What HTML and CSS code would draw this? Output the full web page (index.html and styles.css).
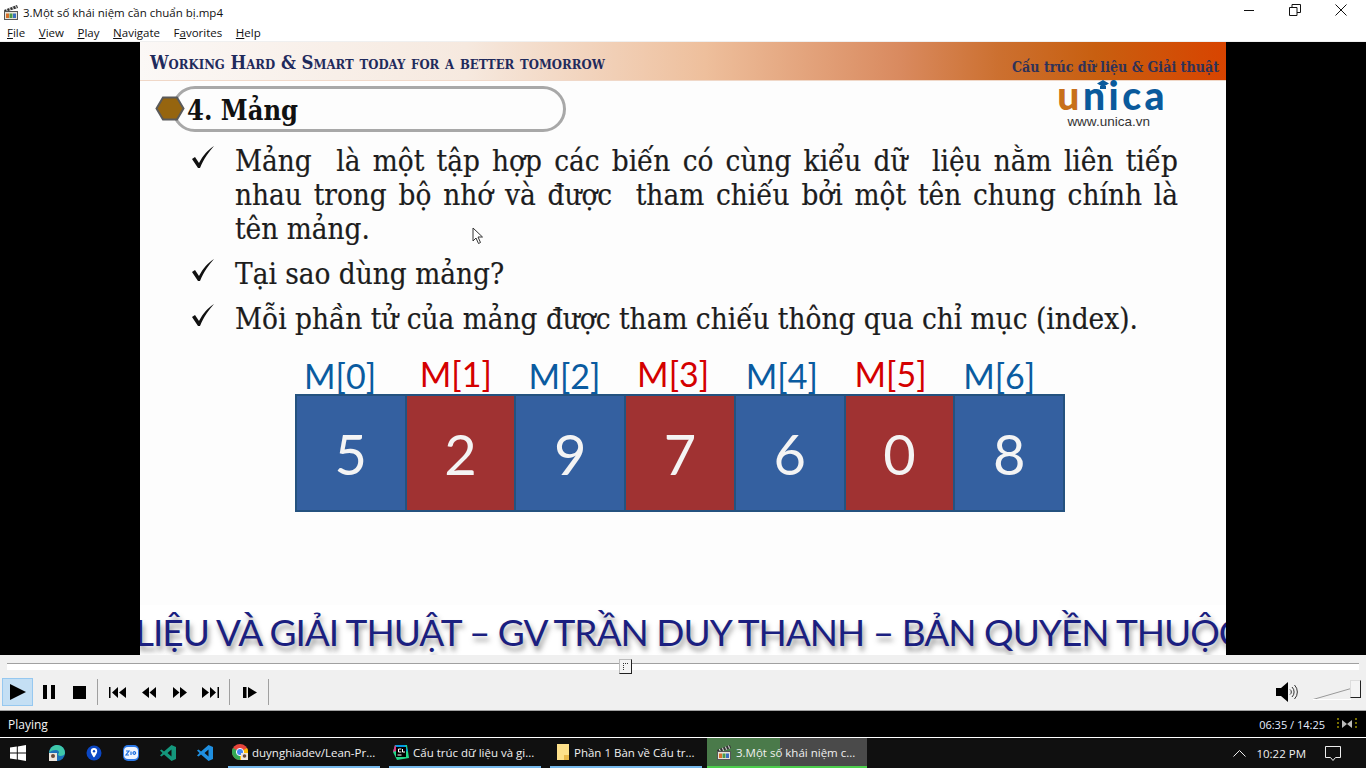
FILE: index.html
```html
<!DOCTYPE html>
<html lang="en">
<head>
    <meta charset="UTF-8">
    <meta name="viewport" content="width=device-width, initial-scale=1.0">
    <title>Media Player</title>
    <link rel="stylesheet" href="styles.css">
</head>
<body>

    <svg width="0" height="0" class="defs">
        <symbol id="clapper" viewBox="0 0 16 16">
            <path d="M1 6L14 1l1 3L2 8z" fill="#333"/>
            <path d="M3.500 5l1 3M6.500 3.800l1 3M9.500 2.700l1 3M12.500 1.600l1 3" stroke="#eee"/>
            <rect x="1.500" y="7.500" width="13" height="8" fill="#e8e4d8" stroke="#555"/>
            <path d="M3 9.500h3v4.500H3z" fill="#d8702a"/>
            <path d="M6.500 9.500h3v4.500h-3z" fill="#4a9a4a"/>
            <path d="M10 9.500h3v4.500h-3z" fill="#3a6fc0"/>
        </symbol>
        <symbol id="tick" viewBox="0 0 26 24">
            <path d="M2 14l3-2 4 6C13 10 18 5 24 1c-5 6-10 12-14 22h-2z" fill="#111"/>
        </symbol>
    </svg>

    <!-- Title and menu -->
    <div class="titlebar">
        <svg class="app-icon" width="16" height="16"><use href="#clapper"/></svg>
        <span class="title">3.Một số khái niệm cần chuẩn bị.mp4</span>
        <div class="winbtns">
            <svg width="12" height="12" viewBox="0 0 12 12"><path d="M1 6.500h10" stroke="#111"/></svg>
            <svg width="12" height="12" viewBox="0 0 12 12"><path d="M.5 3.500h7.500v8H.5zM3 3.500V.5h8.500v8H8" fill="none" stroke="#111"/></svg>
            <svg width="12" height="12" viewBox="0 0 12 12"><path d="M.5 .5l11 11M11.500 .5l-11 11" stroke="#111"/></svg>
        </div>
    </div>
    <div class="menubar">
        <span><u>F</u>ile</span>
        <span><u>V</u>iew</span>
        <span><u>P</u>lay</span>
        <span><u>N</u>avigate</span>
        <span>F<u>a</u>vorites</span>
        <span><u>H</u>elp</span>
    </div>

    <!-- Video area -->
    <div class="video">
        <div class="slide">
            <div class="band">
                <span class="motto">Working Hard &amp; Smart today for a better tomorrow</span>
                <span class="course">Cấu trúc dữ liệu &amp; Giải thuật</span>
            </div>

            <div class="head-row">
                <div class="heading">
                    <svg class="hexagon" width="30" height="25" viewBox="0 0 30 25">
                        <path d="M8 1.500h14l6.500 11-6.500 11H8L1.500 12.500z" fill="#96650f" stroke="#5a5a5a" stroke-width="2"/>
                    </svg>
                    <span class="heading-text">4. Mảng</span>
                </div>
                <div class="logo">
                    <div class="logo-word"><span class="u">u</span>nica
                        <svg class="logo-hat" width="12" height="9" viewBox="0 0 12 9"><path d="M6 0l6 3.500-6 3.500-6-3.500zM3 6h6v3H3z" fill="#0a5a9c"/></svg>
                    </div>
                    <div class="logo-url">www.unica.vn</div>
                </div>
            </div>

            <ul class="points">
                <li>
                    <svg class="check" width="26" height="24"><use href="#tick"/></svg>
                    <p class="just">Mảng &nbsp;là một tập hợp các biến có cùng kiểu dữ &nbsp;liệu nằm liên tiếp nhau trong bộ nhớ và được &nbsp;tham chiếu bởi một tên chung chính là tên mảng.</p>
                </li>
                <li>
                    <svg class="check" width="26" height="24"><use href="#tick"/></svg>
                    <p>Tại sao dùng mảng?</p>
                </li>
                <li>
                    <svg class="check" width="26" height="24"><use href="#tick"/></svg>
                    <p>Mỗi phần tử của mảng được tham chiếu thông qua chỉ mục (index).</p>
                </li>
            </ul>

            <div class="labels">
                <span class="lab blue">M[0]</span>
                <span class="lab red">M[1]</span>
                <span class="lab blue">M[2]</span>
                <span class="lab red">M[3]</span>
                <span class="lab blue">M[4]</span>
                <span class="lab red">M[5]</span>
                <span class="lab blue">M[6]</span>
            </div>
            <div class="cells">
                <div class="cell c-blue">5</div>
                <div class="cell c-red">2</div>
                <div class="cell c-blue">9</div>
                <div class="cell c-red">7</div>
                <div class="cell c-blue">6</div>
                <div class="cell c-red">0</div>
                <div class="cell c-blue">8</div>
            </div>

            <div class="ticker"><span>LIỆU VÀ GIẢI THUẬT – GV TRẦN DUY THANH – BẢN QUYỀN THUỘC</span></div>

            <svg class="cursor" width="12" height="18" viewBox="0 0 12 18">
                <path d="M1 1v13l3-3 2.500 5.500 2-1L6 10h4.500z" fill="#fff" stroke="#333"/>
            </svg>
        </div>
    </div>

    <!-- Seek bar -->
    <div class="seek">
        <div class="track"></div>
        <div class="thumb"></div>
    </div>

    <!-- Player buttons -->
    <div class="toolbar">
        <div class="btn active"><svg width="18" height="16" viewBox="0 0 18 16"><path d="M1 0l16 8-16 8z"/></svg></div>
        <div class="btn"><svg width="12" height="14" viewBox="0 0 12 14"><path d="M0 0h4v14H0zM8 0h4v14H8z"/></svg></div>
        <div class="btn"><svg width="13" height="13" viewBox="0 0 13 13"><path d="M0 0h13v13H0z"/></svg></div>
        <div class="sep"></div>
        <div class="btn"><svg width="17" height="11" viewBox="0 0 17 11"><path d="M0 0h1.500v11H0zM9 0v11L3 5.500zM17 0v11l-7-5.500z"/></svg></div>
        <div class="btn"><svg width="14" height="11" viewBox="0 0 14 11"><path d="M7 0v11L0 5.500zM14 0v11L7.500 5.500z"/></svg></div>
        <div class="btn"><svg width="14" height="11" viewBox="0 0 14 11"><path d="M0 0v11l6.500-5.500zM7 0v11l7-5.500z"/></svg></div>
        <div class="btn"><svg width="17" height="11" viewBox="0 0 17 11"><path d="M0 0v11l7-5.500zM8 0v11l6-5.500zM15.500 0H17v11h-1.500z"/></svg></div>
        <div class="sep sep-b"></div>
        <div class="btn"><svg width="14" height="11" viewBox="0 0 14 11"><path d="M0 0h3.500v11H0zM5 0v11l9-5.500z"/></svg></div>
        <div class="sep sep-b"></div>
        <svg class="volume" width="24" height="22" viewBox="0 0 24 22">
            <path d="M0 7h5l7-6v20l-7-6H0z"/>
            <path d="M14 8.500a3 3 0 010 5M16 6a7 7 0 010 10M18.500 4a10 10 0 010 14" fill="none" stroke="#333"/>
        </svg>
        <div class="vol-slider">
            <svg width="38" height="12" viewBox="0 0 38 12"><path d="M0 11.500L38 .5" stroke="#999"/><path d="M0 11.500h38" stroke="#fff"/></svg>
            <div class="vol-thumb"></div>
        </div>
    </div>

    <!-- Status -->
    <div class="status">
        <span>Playing</span>
        <div class="status-right">
            <span class="time">06:35 / 14:25</span>
            <svg width="20" height="12" viewBox="0 0 20 12">
                <path d="M5 2l5 4-5 4zM15 2l-5 4 5 4z" fill="#bbb"/>
                <path d="M1 0v12M19 0v12" stroke="#e8d800" stroke-dasharray="2 2"/>
            </svg>
        </div>
    </div>

    <!-- Windows taskbar -->
    <div class="taskbar">
        <svg class="tb-win" width="16" height="16" viewBox="0 0 16 16"><path d="M0 2.500L6.800 1.500v6H0zM7.800 1.400L16 0v7.500H7.800zM0 8.500h6.800v6L0 13.500zM7.800 8.500H16V16l-8.200-1.400z" fill="#fff"/></svg>
        <svg class="tb-icon" width="16" height="16" viewBox="0 0 16 16"><circle cx="8" cy="8" r="8" fill="#1a70b8"/><path d="M0 8C1 2 5 0 8 0c5 0 8 4 8 8 0 2-2 3-5 3-1 0-2-1-2-2 2-1 1-4-2-4-3 0-6 1-7 3z" fill="#3fc8a8"/><rect x="0" y="8" width="8" height="8" fill="#ece4dc"/><circle cx="4" cy="11" r="2" fill="#6a4a3a"/></svg>
        <svg class="tb-icon" width="16" height="16" viewBox="0 0 16 16"><circle cx="8" cy="8" r="7.500" fill="#0b47c4"/><path d="M8 3a3.200 3.200 0 013.200 3.200C11.200 8.500 8 12.500 8 12.500S4.800 8.500 4.800 6.200A3.200 3.200 0 018 3z" fill="#fff"/><circle cx="8" cy="6.200" r="1.200" fill="#0b47c4"/></svg>
        <svg class="tb-icon" width="16" height="16" viewBox="0 0 16 16"><rect width="16" height="16" rx="5" fill="#2a78e8"/><rect x="1" y="2" width="14" height="12" rx="4" fill="#eef4ff"/><path d="M3 6h3l-3 4h3M8 6.500v3.500M10 8a1.300 1.300 0 102.600 0 1.300 1.300 0 10-2.600 0" fill="none" stroke="#1a6ee0" stroke-width="1.200"/></svg>
        <svg class="tb-icon" width="16" height="16" viewBox="0 0 16 16"><path d="M11.500 0L16 2v12l-4.500 2L4 9.500 1.500 11.500 0 10.500 2.500 8 0 5.500l1.500-1L4 6.500zM11.500 4.500L7.500 8l4 3.500z" fill="#14977c"/></svg>
        <svg class="tb-icon" width="16" height="16" viewBox="0 0 16 16"><path d="M11.500 0L16 2v12l-4.500 2L4 9.500 1.500 11.500 0 10.500 2.500 8 0 5.500l1.500-1L4 6.500zM11.500 4.500L7.500 8l4 3.500z" fill="#1f8fe0"/></svg>

        <div class="task task-chrome">
            <svg width="16" height="16" viewBox="0 0 16 16"><circle cx="8" cy="8" r="8" fill="#e8453c"/><path d="M8 8L1 4A8 8 0 008 16z" fill="#34a853"/><path d="M8 8l7-4a8 8 0 01-7 12z" fill="#fbbc05"/><circle cx="8" cy="8" r="3.600" fill="#4285f4" stroke="#fff"/><rect x="9" y="9" width="7" height="7" fill="#ece4dc"/><circle cx="12.500" cy="12" r="1.800" fill="#6a4a3a"/></svg>
            <span>duynghiadev/Lean-Pr...</span>
        </div>
        <div class="task task-clion">
            <svg width="16" height="16" viewBox="0 0 16 16"><path d="M2 1l12 0 2 13-12 2-4-8z" fill="#21d789"/><path d="M2 1l10 0 3 6-9 2z" fill="#009ae5"/><path d="M0 8l2-7 4 5z" fill="#e03a8c"/><rect x="3" y="3" width="10" height="10" fill="#000"/><path d="M8.300 5H5.500v3h2.800M9.500 5v3h2.500M4.500 11h4" fill="none" stroke="#fff"/></svg>
            <span>Cấu trúc dữ liệu và gi...</span>
        </div>
        <div class="task task-folder">
            <svg width="12" height="16" viewBox="0 0 12 16"><path d="M0 0h12v16H0z" fill="#fde08a"/><path d="M7 11h5v5H7z" fill="#e8b84a"/></svg>
            <span>Phần 1 Bàn về Cấu tr...</span>
        </div>
        <div class="task task-active">
            <svg width="16" height="16"><use href="#clapper"/></svg>
            <span>3.Một số khái niệm c...</span>
        </div>

        <div class="tray">
            <svg width="13" height="7" viewBox="0 0 13 7"><path d="M.5 6.500l6-6 6 6" fill="none" stroke="#eee"/></svg>
            <span class="clock">10:22 PM</span>
            <svg width="16" height="15" viewBox="0 0 16 15"><path d="M.5 .5h15v11h-5l-2.500 3-2.500-3h-5z" fill="none" stroke="#eee"/></svg>
        </div>
    </div>

</body>
</html>
```

FILE: styles.css
```css
body {
    margin: 0;
    height: 768px;
    overflow: hidden;
    display: flex;
    flex-direction: column;
    font-family: "Open Sans", "Noto Sans", sans-serif;
    font-size: 11.500px;
    background-color: #fff;
    color: #111;
}
.defs {
    position: absolute;
}

/* title + menu */
.titlebar {
    height: 24px;
    display: flex;
    align-items: center;
    padding-left: 3px;
}
.title {
    margin-left: 4px;
}
.winbtns {
    margin-left: auto;
    display: flex;
    gap: 34px;
    padding-right: 19px;
    margin-top: -4px;
}
.menubar {
    height: 17px;
    display: flex;
    gap: 13.600px;
    padding-left: 7px;
    line-height: 17px;
    border-bottom: 1px solid #f0f0f0;
}

/* video */
.video {
    height: 613px;
    background-color: #000;
    display: flex;
    justify-content: center;
}
.slide {
    position: relative;
    width: 1086px;
    background-color: #fdfdfd;
    font-family: "DejaVu Serif Condensed", "Liberation Serif", serif;
}
.band {
    height: 39px;
    display: flex;
    justify-content: space-between;
    align-items: flex-end;
    padding: 0 7px 0 10px;
    background: linear-gradient(to right, #fbf8f6 0%, #f6e9df 30%, #eebf9c 52%, #d98a5f 70%, #cc7030 79%, #c85f10 88%, #d84400 100%);
    border-bottom: 1px solid #f0d8c8;
    box-sizing: border-box;
}
.motto {
    font-variant: small-caps;
    font-weight: bold;
    font-size: 18.400px;
    color: #1f2a5c;
    line-height: 28px;
    padding-bottom: 3px;
}
.course {
    font-weight: bold;
    font-size: 14.100px;
    color: #2f3258;
    line-height: 20px;
    padding-bottom: 3px;
}

.head-row {
    display: flex;
    justify-content: space-between;
    padding: 5px 62px 0 15px;
    height: 63px;
    box-sizing: border-box;
}
.heading {
    display: flex;
    align-items: center;
    height: 46px;
}
.hexagon {
    margin-top: -2px;
    margin-right: -30px;
    position: relative;
}
.heading-text {
    box-sizing: border-box;
    width: 394px;
    height: 46px;
    margin-left: 17px;
    padding-left: 12px;
    border: 3px solid #a8a8a8;
    border-radius: 23px;
    font-size: 27px;
    font-weight: bold;
    line-height: 44px;
    color: #111;
}
.logo {
    text-align: center;
    margin-top: -6px;
}
.logo-word {
    position: relative;
    margin: 0 -4px 5px 4px;
    font-family: "Lato", sans-serif;
    font-weight: 900;
    font-size: 39px;
    line-height: 30px;
    letter-spacing: 3.500px;
    color: #0a5a9c;
}
.logo-hat {
    position: absolute;
    left: 40px;
    top: 0;
}
.u {
    color: #c8701a;
}
.logo-url {
    font-family: "Liberation Sans", sans-serif;
    font-size: 13.500px;
    color: #333;
    line-height: 14px;
}

.points {
    list-style: none;
    margin: 0;
    padding: 0 48px 0 50px;
}
.points li {
    display: flex;
    gap: 19px;
    margin-bottom: 11px;
}
.check {
    flex: none;
    margin-top: 1px;
}
.points p {
    margin: 0;
    flex: 1;
    font-size: 29.400px;
    line-height: 34px;
    color: #1c1c1c;
    -webkit-text-stroke: 0.200px #1c1c1c;
}
.just {
    text-align: justify;
}

/* array */
.labels {
    display: flex;
    align-items: flex-end;
    height: 37px;
    margin-top: 21px;
    padding-left: 164px;
    font-family: "Lato", sans-serif;
    font-size: 34px;
    line-height: 37px;
}
.lab {
    width: 108.700px;
}
.lab:first-child {
    margin-right: 7px;
}
.blue {
    color: #0a5ba0;
}
.red {
    color: #d40000;
    margin-bottom: 2px;
}
.cells {
    display: flex;
    width: 770px;
    height: 118px;
    margin-left: 155px;
    border: 2px solid #24527f;
    box-sizing: border-box;
    font-family: "Lato", sans-serif;
}
.cell {
    flex: 1;
    display: flex;
    align-items: center;
    justify-content: center;
    font-size: 56px;
    color: #f4f4f4;
    border-right: 2px solid #24527f;
}
.cell:last-child {
    border-right: none;
}
.c-blue {
    background-color: #3460a0;
}
.c-red {
    background-color: #a03232;
}

.ticker {
    position: absolute;
    left: 0;
    right: 0;
    bottom: 0;
    height: 50px;
    overflow: hidden;
    white-space: nowrap;
    background-color: #fff;
    font-family: "Lato", sans-serif;
    font-size: 37px;
    letter-spacing: -1px;
    line-height: 54px;
    color: #1b1f80;
    text-shadow: 2px 5px 5px rgba(60, 60, 60, 0.5);
}
.ticker span {
    margin-left: -5px;
    display: inline-block;
}
.cursor {
    position: absolute;
    left: 332px;
    top: 185px;
}

/* seek */
.seek {
    position: relative;
    height: 22px;
    background-color: #f0f0f0;
    padding: 8px 7px 0;
    box-sizing: border-box;
}
.track {
    height: 6px;
    background-color: #fff;
    border-top: 1px solid #a0a0a0;
}
.thumb {
    position: absolute;
    left: 619px;
    top: 4px;
    width: 11px;
    height: 13px;
    background-color: #f4f4f4;
    border: 1px solid #bbb;
    border-right-color: #222;
    border-bottom-color: #222;
}
.thumb::after {
    content: "";
    position: absolute;
    left: 3px;
    top: 3px;
    width: 4px;
    height: 6px;
    border-left: 1px dotted #333;
    border-top: 1px dotted #333;
}

/* toolbar */
.toolbar {
    height: 33px;
    display: flex;
    align-items: flex-start;
    padding-left: 2px;
    background-color: #f0f0f0;
    border-bottom: 1px solid #a0a0a0;
}
.btn {
    box-sizing: border-box;
    width: 31px;
    height: 28px;
    margin-top: 1px;
    display: flex;
    align-items: center;
    justify-content: center;
}
.active {
    background-color: #c4dff4;
    border: 1px solid #96c8f0;
}
.sep {
    width: 1px;
    height: 26px;
    margin: 2px 4px 0 2px;
    background-color: #a0a0a0;
}
.sep-b {
    margin-left: 3px;
}
.volume {
    margin-left: auto;
    margin-top: 4px;
}
.vol-slider {
    position: relative;
    width: 48px;
    height: 20px;
    margin: 3px 5px 0 13px;
}
.vol-slider svg {
    position: absolute;
    left: 0;
    top: 8px;
}
.vol-thumb {
    position: absolute;
    left: 37px;
    top: 0;
    width: 9px;
    height: 16px;
    background-color: #f4f4f4;
    border: 1px solid #ddd;
    border-right-color: #222;
    border-bottom-color: #222;
}

/* status */
.status {
    height: 26px;
    display: flex;
    align-items: center;
    justify-content: space-between;
    padding: 0 9px 0 8px;
    background-color: #000;
    color: #f4f4f4;
    font-size: 12px;
    border-bottom: 1px solid #fff;
}
.status-right {
    display: flex;
    align-items: center;
    gap: 12px;
}
.time {
    font-size: 11px;
    color: #e4eeff;
}

/* taskbar */
.taskbar {
    flex: 1;
    display: flex;
    align-items: center;
    background-color: #101010;
    color: #f0f0f0;
}
.tb-win {
    margin-left: 10px;
    margin-right: 7px;
}
.tb-icon {
    margin-left: 16px;
    margin-right: 5px;
}
.task {
    box-sizing: border-box;
    height: 100%;
    display: flex;
    align-items: center;
    gap: 4px;
    border-bottom: 2px solid #76b9ed;
    white-space: nowrap;
}
.task-chrome {
    width: 152px;
    margin-left: 10px;
    padding-left: 4px;
}
.task-clion {
    width: 152px;
    margin-left: 9px;
    padding-left: 4px;
}
.task-folder {
    width: 152px;
    margin-left: 9px;
    padding-left: 7px;
}
.task-folder span {
    margin-left: 1px;
}
.task-active {
    width: 160px;
    margin-left: 5px;
    padding-left: 9px;
    border-bottom-color: #4ccf4c;
    background: linear-gradient(to right, #4a7a4a 0, #4a7a4a 73px, #4a4a4a 73px);
}
.tray {
    margin-left: auto;
    display: flex;
    align-items: center;
    padding-right: 25px;
}
.clock {
    margin-left: 10px;
    margin-right: 19px;
}
```
